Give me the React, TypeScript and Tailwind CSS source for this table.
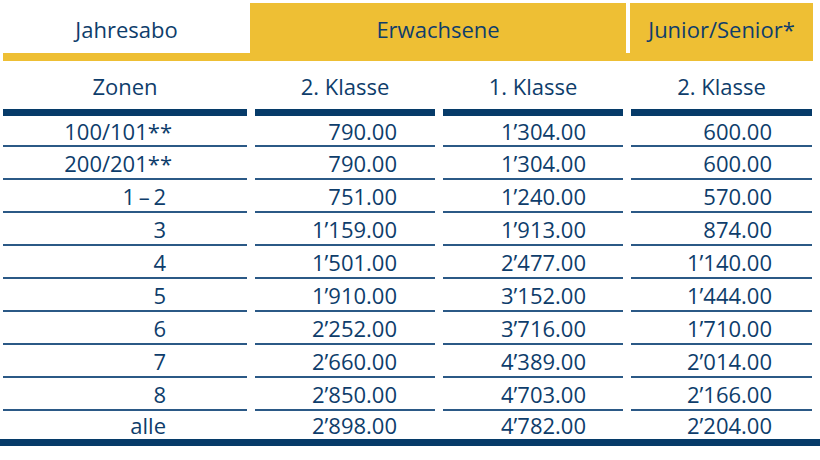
import React from "react";

type Row = {
  zone: string;
  second: string;
  first: string;
  junior: string;
  stars?: boolean;
};

const rows: Row[] = [
  { zone: "100/101**", second: "790.00", first: "1’304.00", junior: "600.00", stars: true },
  { zone: "200/201**", second: "790.00", first: "1’304.00", junior: "600.00", stars: true },
  { zone: "1\u2009–\u20092", second: "751.00", first: "1’240.00", junior: "570.00" },
  { zone: "3", second: "1’159.00", first: "1’913.00", junior: "874.00" },
  { zone: "4", second: "1’501.00", first: "2’477.00", junior: "1’140.00" },
  { zone: "5", second: "1’910.00", first: "3’152.00", junior: "1’444.00" },
  { zone: "6", second: "2’252.00", first: "3’716.00", junior: "1’710.00" },
  { zone: "7", second: "2’660.00", first: "4’389.00", junior: "2’014.00" },
  { zone: "8", second: "2’850.00", first: "4’703.00", junior: "2’166.00" },
  { zone: "alle", second: "2’898.00", first: "4’782.00", junior: "2’204.00" },
];

const grid = "grid grid-cols-[244px_180px_180px_181px] gap-x-[8px] ml-[3px]";

export default function App(): React.ReactElement {
  return (
    <div className="w-[820px] h-[460px] bg-white text-[#0e3d6b] font-['Open_Sans',sans-serif] text-[22px] leading-none">
      {/* Top header */}
      <div className="pt-[3px]">
        <div className="flex ml-[3px] h-[50px]">
          <div className="w-[247px] flex items-center justify-center pt-[2px]">
            Jahresabo
          </div>
          <div className="w-[376px] bg-[#eebf34] flex items-center justify-center pt-[2px]">
            Erwachsene
          </div>
          <div className="w-[4px]" />
          <div className="w-[183px] bg-[#eebf34] flex items-center justify-center pt-[2px]">
            Junior/Senior*
          </div>
        </div>
        <div className="ml-[3px] w-[810px] h-[8px] bg-[#eebf34]" />
      </div>

      {/* Sub header */}
      <div className={grid}>
        {["Zonen", "2. Klasse", "1. Klasse", "2. Klasse"].map((label, i) => (
          <div key={i} className="flex flex-col">
            <div className="h-[48px] flex items-center justify-center pt-[2px]">
              {label}
            </div>
            <div className="h-[7px] bg-[#063b69]" />
          </div>
        ))}
      </div>

      {/* Body */}
      <div className={grid}>
        {rows.map((row, i) => {
          const last = i === rows.length - 1;
          const h = i === 0 ? "h-[29px]" : last ? "h-[28px]" : "h-[31px]";
          const line = last ? null : (
            <div className="h-[2px] bg-[#2b5986]" />
          );
          return (
            <React.Fragment key={i}>
              <div className="flex flex-col">
                <div
                  className={`${h} flex items-center justify-end ${
                    row.stars ? "pr-[75px]" : "pr-[81px]"
                  }`}
                >
                  {row.zone}
                </div>
                {line}
              </div>
              <div className="flex flex-col">
                <div className={`${h} flex items-center justify-end pr-[38px]`}>
                  {row.second}
                </div>
                {line}
              </div>
              <div className="flex flex-col">
                <div className={`${h} flex items-center justify-end pr-[37px]`}>
                  {row.first}
                </div>
                {line}
              </div>
              <div className="flex flex-col">
                <div className={`${h} flex items-center justify-end pr-[40px]`}>
                  {row.junior}
                </div>
                {line}
              </div>
            </React.Fragment>
          );
        })}
      </div>

      <div className="w-[820px] h-[7px] bg-[#063b69]" />
    </div>
  );
}
